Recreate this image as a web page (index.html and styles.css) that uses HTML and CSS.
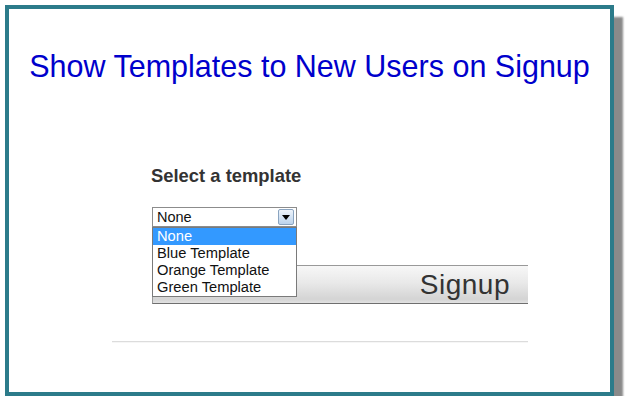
FILE: index.html
```html
<!DOCTYPE html>
<html>
<head>
    <title>Show Templates to New Users on Signup</title>
    <link rel="stylesheet" href="styles.css">
</head>
<body>
    <div class="frame">
        <h1 class="title">Show Templates to New Users on Signup</h1>

        <div class="content">
            <div class="fields">
                <div class="label">Select a template</div>

                <div class="select">
                    <div class="select-box">
                        <span>None</span>
                        <span class="arrow"></span>
                    </div>
                    <ul class="options">
                        <li class="selected">None</li>
                        <li>Blue Template</li>
                        <li>Orange Template</li>
                        <li>Green Template</li>
                    </ul>
                </div>

                <button class="signup">Signup</button>
            </div>
            <hr class="rule">
        </div>
    </div>
</body>
</html>
```

FILE: styles.css
```css
body { margin: 0; background: white; font-family: "Liberation Sans", Arial, sans-serif; }
.frame { margin: 5px 0 0 5px; width: 601px; height: 383px; border: 4px solid #2c7b8a; background: white; box-shadow: 9px 12px 2px #8a8a8a; }
.title { margin: 40px 0 0; text-align: center; font-size: 30.5px; font-weight: normal; line-height: 34px; color: #0000cc; }
.content { margin: 82px 0 0 103px; width: 416px; }
.fields { padding-left: 40px; }
.label { font-size: 18.4px; font-weight: bold; line-height: 22px; color: #333; margin-left: -1px; }
.select { position: relative; width: 145px; margin-top: 20px; }
.select-box { display: flex; align-items: center; justify-content: space-between; height: 18px; border: 1px solid #8c8c8c; padding: 0 2px 0 4px; font-size: 14.5px; color: #111; background: white; }
.arrow { width: 14px; height: 14px; border: 1px solid #8aa4c0; border-radius: 2px; background: linear-gradient(#eef4fb, #bcd3ec); position: relative; }
.arrow::after { content: ""; position: absolute; left: 3px; top: 5px; border-left: 4px solid transparent; border-right: 4px solid transparent; border-top: 5px solid #000; }
.options { position: absolute; left: 0; top: 20px; z-index: 2; width: 143px; margin: 0; padding: 0; list-style: none; border: 1px solid #7a7a7a; background: white; font-size: 14.7px; color: #111; }
.options li { height: 17px; line-height: 17px; padding-left: 4px; }
.options .selected { background: #3399ff; color: white; }
.signup { display: block; width: 376px; height: 39px; margin-top: 38px; padding: 0 18px 0 0; text-align: right; font-family: "Liberation Sans", Arial, sans-serif; font-size: 28px; letter-spacing: 0.5px; color: #333; border: 1px solid #999; border-right: none; border-bottom-color: #6f6f6f; background: linear-gradient(#f7f7f7, #e9e9e9 45%, #d4d4d4 90%, #e2e2e2); }
.rule { margin: 37px 0 0; border: none; border-top: 1px solid #dcdcdc; border-bottom: 1px solid #f6f6f6; height: 0; }
```
